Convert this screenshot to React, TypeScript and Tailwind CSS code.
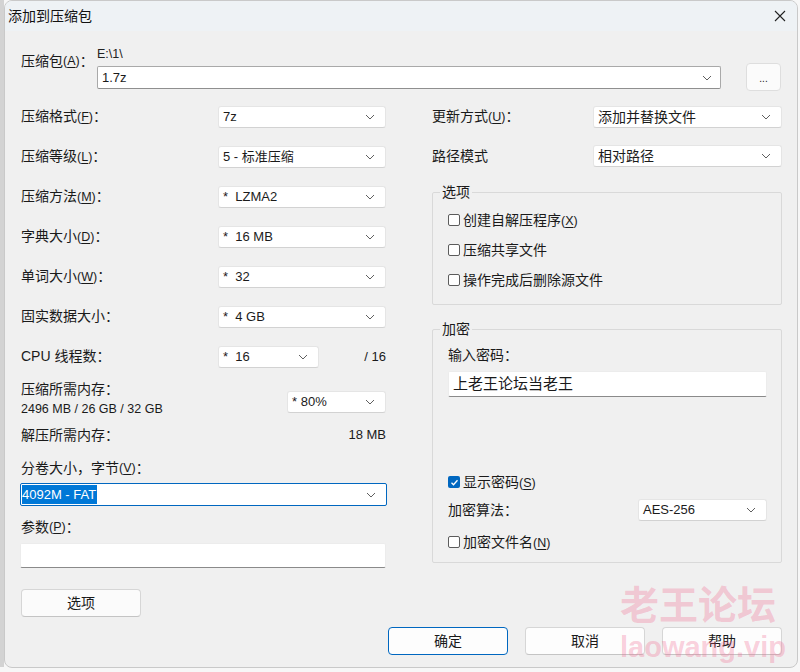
import React from "react";

function Chevron() {
  return (
    <svg width="10" height="6" viewBox="0 0 10 6" className="shrink-0">
      <path d="M1 1l4 4 4-4" fill="none" stroke="#5f5f5f" strokeWidth="1" />
    </svg>
  );
}

function Acc({ k }: { k: string }) {
  return (
    <span className="text-[12.5px]">
      (<span className="underline underline-offset-2">{k}</span>)
    </span>
  );
}

function Sel({ text, className = "" }: { text: React.ReactNode; className?: string }) {
  return (
    <div
      className={
        "flex items-center justify-between h-[22px] bg-white border border-[#e5e5e5] border-b-[#d2d2d2] rounded-[3px] pl-[4px] pr-[10px] text-[13px] text-[#1b1b1b] " +
        className
      }
    >
      <span className="whitespace-pre">{text}</span>
      <Chevron />
    </div>
  );
}

function Check({ checked = false }: { checked?: boolean }) {
  return checked ? (
    <span className="flex items-center justify-center w-[12px] h-[12px] rounded-[2px] bg-[#0067c0] shrink-0">
      <svg width="9" height="9" viewBox="0 0 9 9">
        <path d="M1.5 4.8l2 2 4-4.6" fill="none" stroke="#fff" strokeWidth="1.3" />
      </svg>
    </span>
  ) : (
    <span className="w-[12px] h-[12px] rounded-[2px] border border-[#5c5c5c] bg-white shrink-0" />
  );
}

function Row({ label, children }: { label: React.ReactNode; children: React.ReactNode }) {
  return (
    <div className="flex items-center h-[40px]">
      <div className="w-[197px] text-[14px] -mt-[1px]">{label}</div>
      {children}
    </div>
  );
}

function Btn({ children, primary = false }: { children: React.ReactNode; primary?: boolean }) {
  return (
    <div
      className={
        "flex items-center justify-center w-[120px] h-[28px] rounded-[4px] bg-[#fdfdfd] text-[14px] " +
        (primary ? "border border-[#0067c0]" : "border border-[#d6d6d6] border-b-[#c4c4c4]")
      }
    >
      {children}
    </div>
  );
}

export default function App() {
  return (
    <div className="relative flex w-[800px] h-[672px] bg-[#f7f7f7] overflow-hidden font-['Liberation_Sans','Noto_Sans_CJK_SC',sans-serif] text-[#1a1a1a]">
      <div className="w-[4px] h-[667px] bg-[#d3d3d3]" />
      <div className="w-[794px] h-[668px] bg-[#f0f0f0] border border-[#c9c9c9] rounded-t-[8px] rounded-b-[8px] overflow-hidden flex flex-col">
        {/* title bar */}
        <div className="flex items-center justify-between h-[30px] bg-[#eef2f5] pl-[3px] pr-[11px]">
          <span className="text-[14px] text-[#111]">添加到压缩包</span>
          <svg width="12" height="12" viewBox="0 0 12 12">
            <path d="M1 1l10 10M11 1L1 11" stroke="#222" strokeWidth="1.1" fill="none" />
          </svg>
        </div>

        <div className="flex flex-col pl-[16px]">
          {/* archive row */}
          <div className="flex items-start mt-[15px]">
            <div className="w-[76px] h-[20px] mt-[5px] flex items-center text-[14px]">
              压缩包<Acc k="A" />：
            </div>
            <div className="flex flex-col w-[624px]">
              <div className="h-[16px] flex items-center text-[12.5px] text-[#222]">E:\1\</div>
              <div className="mt-[4px] flex items-center justify-between h-[23px] bg-white border border-[#a9a9a9] border-b-[#8f8f8f] rounded-[2px] pl-[4px] pr-[8px] text-[13px]">
                <span>1.7z</span>
                <Chevron />
              </div>
            </div>
            <div className="ml-[25px] mt-[17px] w-[35px] h-[28px] rounded-[4px] bg-[#fbfbfb] border border-[#dedede] flex items-end justify-center pb-[6px] text-[10px] leading-none">
              ...
            </div>
          </div>

          {/* two columns */}
          <div className="flex mt-[6px]">
            {/* left column */}
            <div className="flex flex-col w-[365px]">
              <Row label={<>压缩格式<Acc k="F" />：</>}>
                <Sel text="7z" className="w-[168px]" />
              </Row>
              <Row label={<>压缩等级<Acc k="L" />：</>}>
                <Sel text="5 - 标准压缩" className="w-[168px]" />
              </Row>
              <Row label={<>压缩方法<Acc k="M" />：</>}>
                <Sel text="*  LZMA2" className="w-[168px]" />
              </Row>
              <Row label={<>字典大小<Acc k="D" />：</>}>
                <Sel text="*  16 MB" className="w-[168px]" />
              </Row>
              <Row label={<>单词大小<Acc k="W" />：</>}>
                <Sel text="*  32" className="w-[168px]" />
              </Row>
              <Row label={<>固实数据大小：</>}>
                <Sel text="*  4 GB" className="w-[168px]" />
              </Row>
              <Row label={<>CPU 线程数：</>}>
                <Sel text="*  16" className="w-[101px]" />
                <span className="ml-auto text-[13px]">/ 16</span>
              </Row>
              <div className="flex items-start mt-[2px]">
                <div className="flex flex-col">
                  <div className="h-[20px] flex items-center text-[14px]">压缩所需内存：</div>
                  <div className="h-[20px] flex items-center text-[12.5px]">2496 MB / 26 GB / 32 GB</div>
                </div>
                <Sel text="* 80%" className="ml-auto mt-[12px] w-[99px]" />
              </div>
              <div className="flex items-center h-[20px] mt-[6px]">
                <span className="text-[14px]">解压所需内存：</span>
                <span className="ml-auto text-[13px]">18 MB</span>
              </div>
              <div className="h-[20px] mt-[13px] flex items-center text-[14px]">
                分卷大小，字节<Acc k="V" />：
              </div>
              <div className="mt-[5px] -ml-[1px] flex items-center justify-between h-[23px] w-[367px] bg-white border border-[#0067c0] rounded-[2px] pl-[1px] pr-[10px]">
                <span className="bg-[#0078d7] text-white text-[13px] h-[19px] flex items-center pr-[1px]">4092M - FAT</span>
                <Chevron />
              </div>
              <div className="h-[20px] mt-[11px] flex items-center text-[14px]">
                参数<Acc k="P" />：
              </div>
              <div className="mt-[6px] -ml-[1px] h-[25px] w-[366px] bg-white border border-[#ececec] border-b-[#8a8a8a] rounded-[2px]" />
              <div className="mt-[21px] w-[120px] h-[28px] rounded-[4px] bg-[#fbfbfb] border border-[#d6d6d6] border-b-[#c4c4c4] flex items-center justify-center text-[14px]">
                选项
              </div>
            </div>

            {/* right column */}
            <div className="flex flex-col w-[350px] ml-[46px]">
              <div className="flex items-center h-[40px]">
                <div className="w-[161px] text-[14px] -mt-[1px]">
                  更新方式<Acc k="U" />：
                </div>
                <Sel text="添加并替换文件" className="w-[189px] text-[14px]" />
              </div>
              <div className="flex items-center h-[38px]">
                <div className="w-[161px] text-[14px]">路径模式</div>
                <Sel text="相对路径" className="w-[189px] text-[14px]" />
              </div>

              <div className="relative mt-[17px] h-[113px] border border-[#d9d9d9] rounded-[2px] pt-[12px] pl-[15px]">
                <span className="absolute left-[7px] -top-[11px] px-[2px] bg-[#f0f0f0] text-[14px] leading-[20px]">选项</span>
                <div className="flex items-center h-[30px] gap-[3px] text-[14px]">
                  <Check />
                  <span>创建自解压程序<Acc k="X" /></span>
                </div>
                <div className="flex items-center h-[30px] gap-[3px] text-[14px]">
                  <Check />
                  <span>压缩共享文件</span>
                </div>
                <div className="flex items-center h-[30px] gap-[3px] text-[14px]">
                  <Check />
                  <span>操作完成后删除源文件</span>
                </div>
              </div>

              <div className="relative mt-[24px] h-[234px] border border-[#d9d9d9] rounded-[2px] pt-[15px] pl-[15px] flex flex-col">
                <span className="absolute left-[7px] -top-[11px] px-[2px] bg-[#f0f0f0] text-[14px] leading-[20px]">加密</span>
                <div className="h-[20px] flex items-center text-[14px]">输入密码：</div>
                <div className="mt-[6px] w-[319px] h-[26px] bg-white border border-[#ececec] border-b-[#8a8a8a] rounded-[2px] flex items-center pl-[4px] text-[15px]">
                  上老王论坛当老王
                </div>
                <div className="mt-[75px] h-[20px] flex items-center gap-[3px] text-[14px]">
                  <Check checked />
                  <span>显示密码<Acc k="S" /></span>
                </div>
                <div className="mt-[7px] h-[22px] flex items-center">
                  <div className="w-[190px] text-[14px]">加密算法：</div>
                  <Sel text="AES-256" className="w-[129px]" />
                </div>
                <div className="mt-[11px] h-[20px] flex items-center gap-[3px] text-[14px]">
                  <Check />
                  <span>加密文件名<Acc k="N" /></span>
                </div>
              </div>
            </div>
          </div>

          {/* bottom buttons */}
          <div className="flex justify-end gap-[17px] mt-[10px] pr-[15px]">
            <Btn primary>确定</Btn>
            <Btn>取消</Btn>
            <Btn>帮助</Btn>
          </div>
        </div>
      </div>

      {/* watermark */}
      <div className="absolute left-[620px] top-[583px] flex flex-col items-start pointer-events-none text-[rgba(240,100,140,0.3)] font-bold leading-none">
        <span className="text-[39px] font-['Noto_Sans_CJK_SC',sans-serif]">老王论坛</span>
        <span className="text-[29px] font-['Liberation_Sans',sans-serif] font-bold mt-[11px]">laowang.vip</span>
      </div>
    </div>
  );
}
